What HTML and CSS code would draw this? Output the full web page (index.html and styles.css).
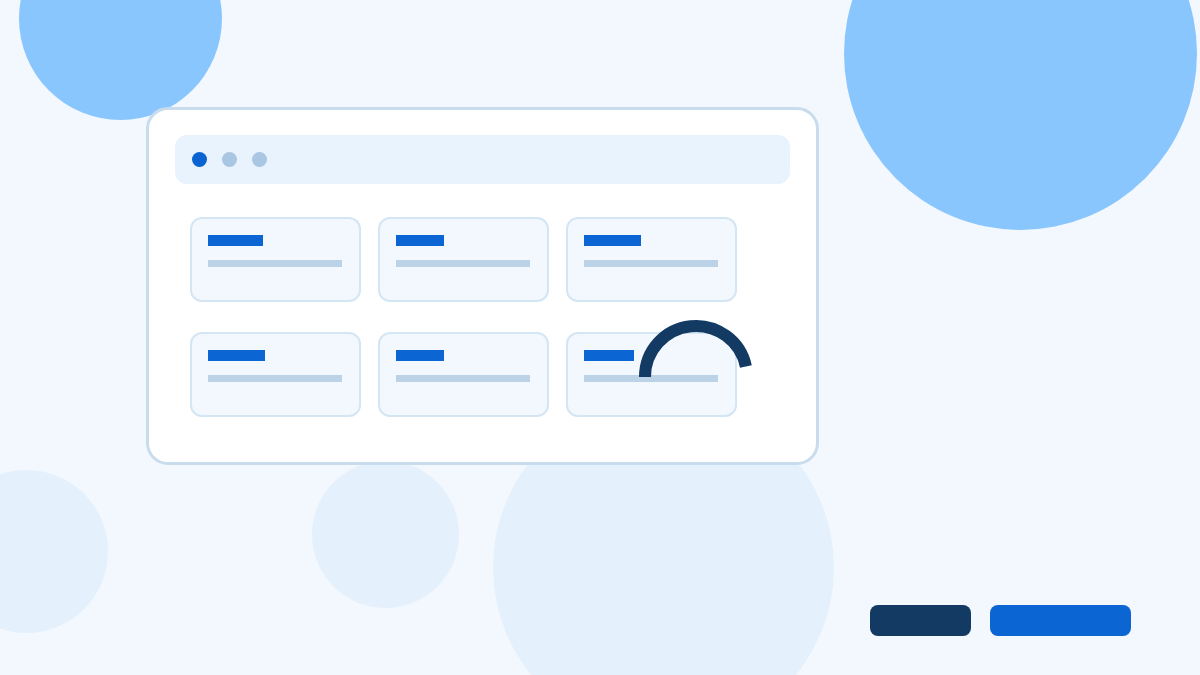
FILE: index.html
```html
<!DOCTYPE html>
<html>
<head>
<meta charset="utf-8">
<link rel="stylesheet" href="styles.css">
</head>
<body>
<div class="page">
  <div class="blob blob-tl"></div>
  <div class="blob blob-tr"></div>
  <div class="blob blob-bl"></div>
  <div class="blob blob-bm"></div>
  <div class="blob blob-bc"></div>

  <div class="window">
    <div class="titlebar">
      <span class="dot dot-active"></span>
      <span class="dot"></span>
      <span class="dot"></span>
    </div>
    <div class="grid">
      <div class="card"><div class="title w55"></div><div class="line"></div></div>
      <div class="card"><div class="title w48"></div><div class="line"></div></div>
      <div class="card"><div class="title w57"></div><div class="line"></div></div>
      <div class="card"><div class="title w57"></div><div class="line"></div></div>
      <div class="card"><div class="title w48"></div><div class="line"></div></div>
      <div class="card"><div class="title w50"></div><div class="line"></div></div>
    </div>
    <svg class="gauge" width="130" height="70" viewBox="0 0 130 70">
      <path d="M14 63 A51 51 0 0 1 114.9 52.4" fill="none" stroke="#123a63" stroke-width="12" stroke-linecap="butt"/>
    </svg>
  </div>

  <div class="actions">
    <div class="btn btn-dark"></div>
    <div class="btn btn-primary"></div>
  </div>
</div>
</body>
</html>
```

FILE: styles.css
```css
html, body {
  margin: 0;
  padding: 0;
}
body {
  background: #f3f8fe;
  font-family: "Liberation Sans", Arial, sans-serif;
  overflow: hidden;
}
.page {
  position: relative;
  width: 1200px;
  height: 675px;
  overflow: hidden;
  box-sizing: border-box;
  padding: 107px 0 0 146px;
  display: flex;
  flex-direction: column;
}
.blob {
  position: absolute;
  border-radius: 50%;
  z-index: 0;
}
.blob-tl { left: 19px; top: -83px; width: 203px; height: 203px; background: #8ac6fe; }
.blob-tr { left: 844px; top: -123px; width: 353px; height: 353px; background: #8ac6fe; }
.blob-bl { left: -55px; top: 470px; width: 163px; height: 163px; background: #e4f0fc; }
.blob-bm { left: 312px; top: 461px; width: 147px; height: 147px; background: #e4f0fc; }
.blob-bc { left: 493px; top: 397px; width: 341px; height: 341px; background: #e4f0fc; }

.window {
  position: relative;
  z-index: 1;
  width: 673px;
  box-sizing: border-box;
  background: #ffffff;
  border: 3px solid #c8dcee;
  border-radius: 22px;
  padding: 25px 26px 45px 26px;
}
.titlebar {
  height: 49px;
  background: #e8f3fd;
  border-radius: 12px;
  display: flex;
  align-items: center;
  gap: 15px;
  padding-left: 17px;
}
.dot {
  width: 15px;
  height: 15px;
  border-radius: 50%;
  background: #a9c6e2;
}
.dot-active { background: #0b63d1; }

.grid {
  margin: 33px 0 0 15px;
  display: grid;
  grid-template-columns: repeat(3, 171px);
  grid-auto-rows: 85px;
  column-gap: 17px;
  row-gap: 30px;
}
.card {
  box-sizing: border-box;
  background: #f2f8fd;
  border: 2px solid #d4e5f4;
  border-radius: 12px;
  padding: 16px 0 0 16px;
}
.title {
  height: 11px;
  background: #0b66d3;
}
.w48 { width: 48px; }
.w50 { width: 50px; }
.w55 { width: 55px; }
.w57 { width: 57px; }
.line {
  margin-top: 14px;
  width: 134px;
  height: 7px;
  background: #bcd3e7;
}
.gauge {
  position: absolute;
  left: 482px;
  top: 204px;
}

.actions {
  position: relative;
  z-index: 1;
  margin-top: 140px;
  margin-left: 724px;
  display: flex;
  gap: 19px;
}
.btn {
  height: 31px;
  border-radius: 8px;
}
.btn-dark { width: 101px; background: #123a63; }
.btn-primary { width: 141px; background: #0b66d3; }
```
